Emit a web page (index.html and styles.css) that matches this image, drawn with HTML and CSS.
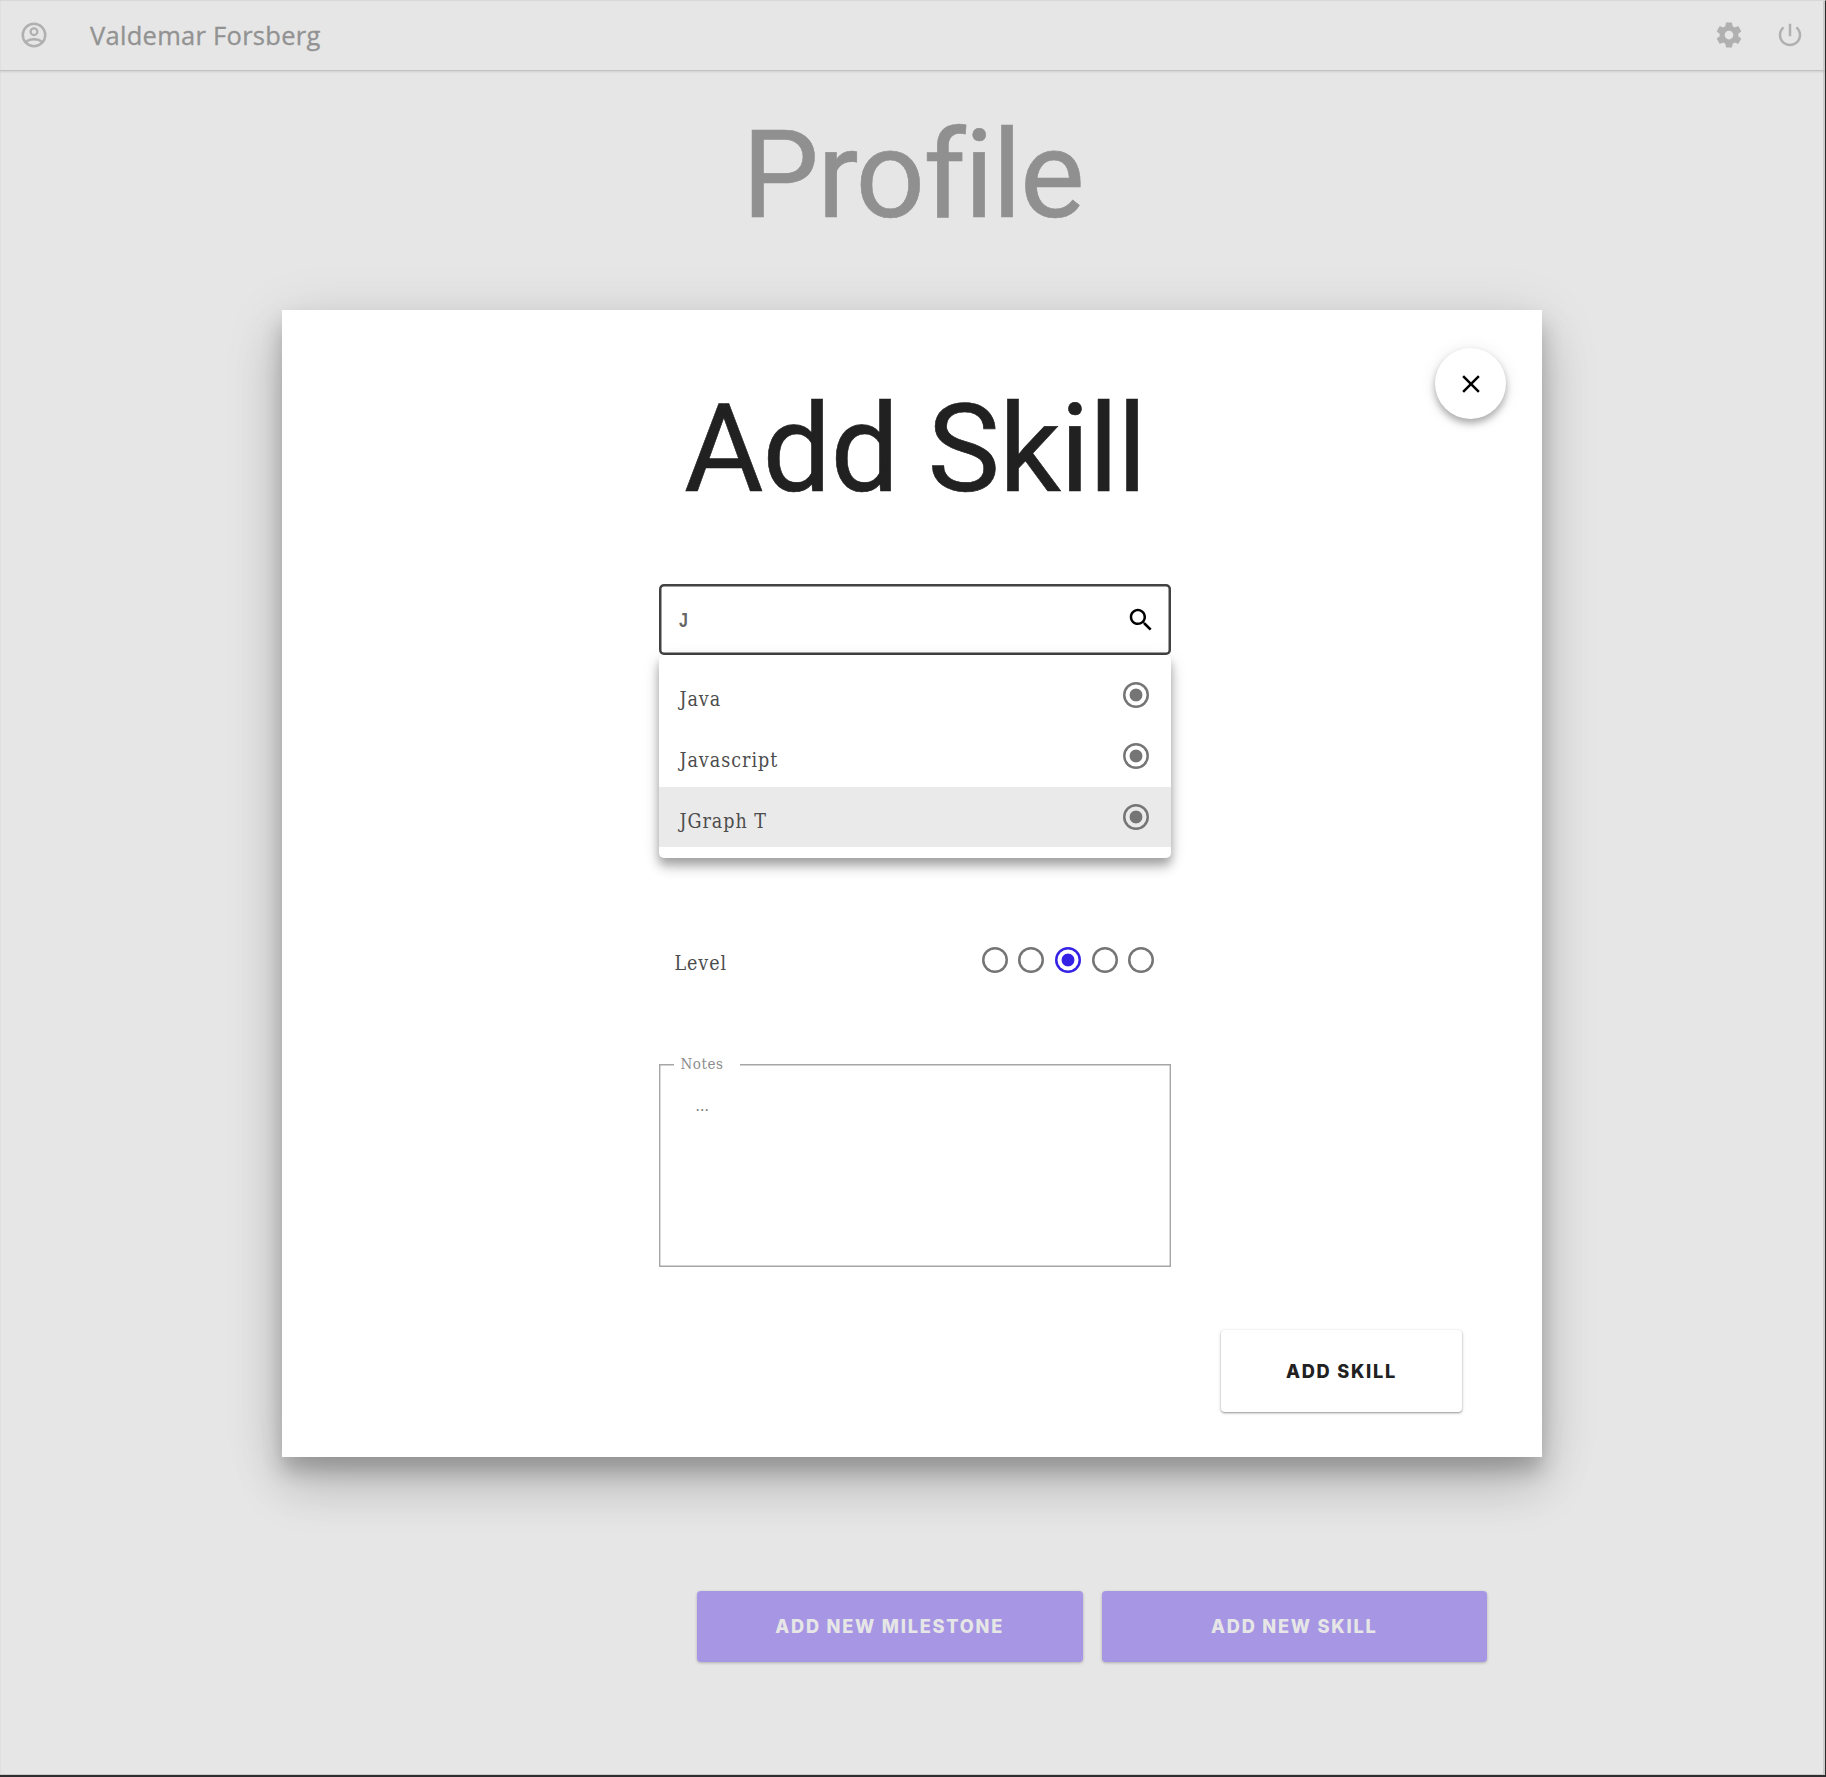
FILE: index.html
```html
<!DOCTYPE html>
<html lang="en">
<head>
<meta charset="utf-8">
<title>Profile</title>
<link rel="stylesheet" href="styles.css">
</head>
<body>
<div class="page">
  <header class="topbar">
    <svg class="icon" viewBox="0 0 24 24"><circle cx="12" cy="12" r="9" fill="none" stroke="currentColor" stroke-width="2"/><circle cx="12" cy="9.3" r="2.7" fill="none" stroke="currentColor" stroke-width="1.8"/><path d="M5.6 17.6C7.3 16 9.6 15.4 12 15.4s4.700.6 6.400 2.200" fill="none" stroke="currentColor" stroke-width="1.9"/></svg>
    <span class="user">Valdemar Forsberg</span>
    <svg class="icon" viewBox="0 0 24 24"><path fill="currentColor" d="M19.43 12.98c.04-.32.07-.64.07-.98s-.03-.66-.07-.98l2.110-1.650c.19-.15.24-.42.12-.64l-2-3.460c-.12-.22-.39-.3-.61-.22l-2.490 1c-.52-.4-1.080-.73-1.690-.98l-.38-2.650C14.460 2.180 14.250 2 14 2h-4c-.25 0-.46.18-.49.42l-.38 2.650c-.61.25-1.170.59-1.690.98l-2.490-1c-.23-.09-.49 0-.61.22l-2 3.460c-.13.22-.07.49.12.64l2.110 1.650c-.04.32-.07.65-.07.98s.03.66.07.98l-2.110 1.650c-.19.15-.24.42-.12.64l2 3.460c.12.22.39.3.61.22l2.490-1c.52.4 1.080.73 1.690.98l.38 2.650c.03.24.24.42.49.42h4c.25 0 .46-.18.49-.42l.38-2.650c.61-.25 1.170-.59 1.690-.98l2.490 1c.23.09.49 0 .61-.22l2-3.460c.12-.22.07-.49-.12-.64l-2.110-1.650zM12 15.500c-1.930 0-3.500-1.570-3.500-3.500s1.570-3.500 3.500-3.500 3.500 1.570 3.500 3.500-1.570 3.500-3.500 3.500z"/></svg>
    <svg class="icon" viewBox="0 0 24 24"><path fill="currentColor" d="M13 3h-2v10h2V3zm4.830 2.170l-1.420 1.420C17.990 7.860 19 9.810 19 12c0 3.870-3.130 7-7 7s-7-3.130-7-7c0-2.190 1.010-4.140 2.580-5.420L6.170 5.170C4.230 6.820 3 9.260 3 12c0 4.970 4.030 9 9 9s9-4.030 9-9c0-2.740-1.230-5.180-3.170-6.830z"/></svg>
  </header>
  <h1 class="title page-title">Profile</h1>
  <div class="actions">
    <button class="btn primary">Add new milestone</button>
    <button class="btn primary">Add new skill</button>
  </div>
</div>

<section class="modal">
  <button class="close"><svg class="icon" viewBox="0 0 24 24"><path fill="currentColor" d="M19 6.410L17.590 5 12 10.590 6.410 5 5 6.410 10.590 12 5 17.590 6.410 19 12 13.410 17.590 19 19 17.590 13.410 12z"/></svg></button>
  <h2 class="title modal-title">Add Skill</h2>
  <div class="form">
    <div class="search">
      <span class="query">J</span>
      <svg class="icon" viewBox="0 0 24 24"><path fill="currentColor" d="M15.500 14h-.79l-.28-.27C15.410 12.590 16 11.110 16 9.500 16 5.910 13.090 3 9.500 3S3 5.910 3 9.500 5.910 16 9.500 16c1.610 0 3.090-.59 4.230-1.570l.27.28v.79l5 4.990L20.490 19l-4.990-5zm-6 0C7.010 14 5 11.990 5 9.500S7.010 5 9.500 5 14 7.010 14 9.500 11.990 14 9.500 14z"/></svg>
    </div>
    <ul class="menu">
      <li class="option"><span>Java</span><i class="radio on"></i></li>
      <li class="option"><span>Javascript</span><i class="radio on"></i></li>
      <li class="option active"><span>JGraph T</span><i class="radio on"></i></li>
    </ul>
    <div class="level">
      <span>Level</span>
      <div class="scale"><i class="radio"></i><i class="radio"></i><i class="radio on chosen"></i><i class="radio"></i><i class="radio"></i></div>
    </div>
    <div class="notes">
      <span class="legend">Notes</span>
      <p class="placeholder">...</p>
    </div>
  </div>
  <button class="btn submit">Add skill</button>
</section>
</body>
</html>
```
FILE: styles.css
```css
* { box-sizing: border-box; margin: 0; padding: 0; }

body {
  position: relative;
  width: 1826px;
  height: 1777px;
  overflow: hidden;
  background: #e6e6e6;
  color: #4c4c4c;
  font-family: "DejaVu Serif Condensed", "DejaVu Serif", serif;
}

button { border: 0; font: inherit; color: inherit; }
.icon { display: block; flex: none; width: 30px; height: 30px; }

.page {
  display: flex;
  flex-direction: column;
  height: 1777px;
  border-top: 1px solid #d9d9d9;
  border-right: 1px solid #2b2b2b;
  border-bottom: 2px solid #2d2e30;
  box-shadow: inset -2px -1px 0 #cbcbcb, inset 1px 0 0 #dfdfdf;
}

.topbar {
  display: flex;
  align-items: center;
  height: 70px;
  padding: 0 20.500px 2px 19px;
  border-bottom: 1px solid #c2c2c2;
  box-shadow: 0 1px 2px rgba(0, 0, 0, .1);
  color: #b0b0b0;
}

.user {
  flex: 1;
  padding-left: 41px;
  color: #929292;
  font: 500 25.500px/32px "Open Sans", sans-serif;
  letter-spacing: .28px;
  -webkit-text-stroke: .3px #929292;
}
.topbar .icon + .icon { margin-left: 31px; }

.title {
  text-align: center;
  font: 400 122px/122px Roboto, sans-serif;
  font-variant-ligatures: none;
}
.page-title {
  margin-top: 44px;
  color: #909090;
  letter-spacing: -1.700px;
  -webkit-text-stroke: .6px #909090;
}

.actions {
  display: flex;
  gap: 19px;
  margin: 1354px 338px 0 697px;
}

.btn {
  height: 71px;
  border-radius: 4px;
  font: 800 18.200px/24px Inter, sans-serif;
  letter-spacing: 1.750px;
  text-transform: uppercase;
}
.primary {
  flex: 1;
  padding-bottom: 1px;
  background: #a796e4;
  color: #e6e6e6;
  box-shadow: 0 1px 3px rgba(0, 0, 0, .25);
}

.modal {
  position: absolute;
  left: 282px;
  top: 310px;
  display: flex;
  flex-direction: column;
  width: 1260px;
  height: 1146.500px;
  padding-top: 79px;
  background: #fff;
  box-shadow: 0 14px 19px rgba(0, 0, 0, .2), 0 11px 58px rgba(0, 0, 0, .12), 0 30px 48px rgba(0, 0, 0, .14);
}
.modal-title {
  padding-left: 6px;
  color: #212121;
  letter-spacing: -.950px;
  -webkit-text-stroke: .6px #212121;
}

.close {
  position: absolute;
  top: 38px;
  right: 36px;
  display: flex;
  align-items: center;
  justify-content: center;
  width: 71px;
  height: 71px;
  border-radius: 50%;
  background: #fff;
  color: #000;
  box-shadow: 0 4px 6px rgba(0, 0, 0, .2), 0 1px 18px rgba(0, 0, 0, .08), 0 5px 10px rgba(0, 0, 0, .12);
}

.form { width: 512px; margin: 73px 0 0 377.400px; }

.search {
  display: flex;
  align-items: center;
  justify-content: space-between;
  height: 71px;
  padding: 0 15px 0 20px;
  border-radius: 5px;
  color: #000;
  box-shadow: inset 0 0 0 2.500px #424242;
}
.query {
  color: #666;
  font: 700 20px/24px "Liberation Sans", sans-serif;
  transform: scaleX(.8);
  transform-origin: left;
}

.menu {
  position: relative;
  height: 203px;
  padding-top: 10px;
  border-radius: 5px;
  background: #fff;
  list-style: none;
  box-shadow: 0 6px 8px rgba(0, 0, 0, .2), 0 4px 18px rgba(0, 0, 0, .12), 0 10px 13px rgba(0, 0, 0, .14);
}
.option {
  display: flex;
  justify-content: space-between;
  height: 61px;
  padding: 17px 22px 0 20px;
  font-size: 19.500px;
  line-height: 36px;
  letter-spacing: 1px;
}
.option.active { height: 60px; background: #eaeaea; }

.radio {
  display: block;
  width: 26px;
  height: 26px;
  border-radius: 50%;
  color: #757575;
  box-shadow: inset 0 0 0 2.500px currentColor;
}
.radio.on { background: radial-gradient(circle, currentColor 6px, transparent 6.800px); }
.radio.chosen { color: #3423e4; }

.level {
  display: flex;
  justify-content: space-between;
  margin-top: 89px;
  padding: 0 17px 0 15px;
  font-size: 19.500px;
  line-height: 33px;
  letter-spacing: .950px;
}
.scale { display: flex; gap: 10.700px; }

.notes {
  height: 203px;
  margin-top: 84px;
  padding-top: 1px;
  box-shadow: inset 0 0 0 1.400px #a6a6a6;
}
.legend {
  display: block;
  width: 66px;
  margin: -13px 0 0 15px;
  padding-left: 6px;
  background: #fff;
  color: #8c8c8c;
  font-size: 15px;
  line-height: 24px;
  letter-spacing: .6px;
}
.placeholder { padding: 18px 0 0 36px; color: #757575; font-size: 15px; line-height: 24px; letter-spacing: .3px; }

.submit {
  width: 241px;
  height: 82px;
  margin: 63px 0 0 939px;
  padding-bottom: 1px;
  background: #fff;
  color: #212121;
  box-shadow: 0 1px 2px rgba(0, 0, 0, .35), 0 1px 4px rgba(0, 0, 0, .12);
}
```
